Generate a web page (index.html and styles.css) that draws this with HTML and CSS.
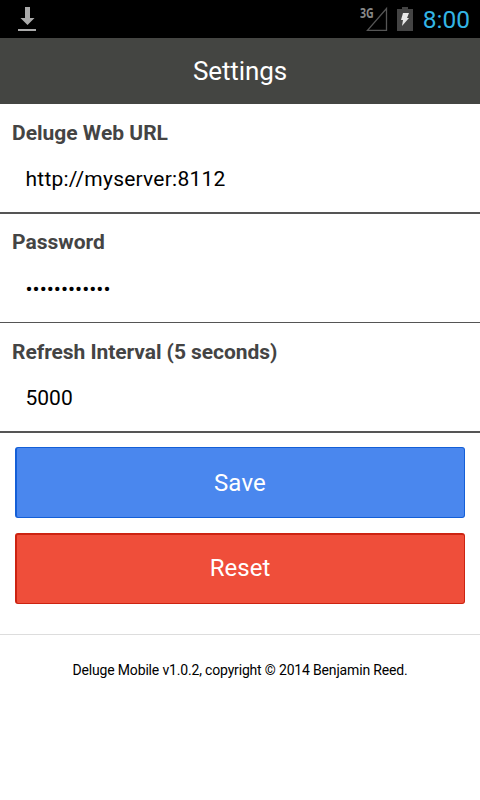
FILE: index.html
```html
<!DOCTYPE html>
<html lang="en">
<head>
<meta charset="utf-8">
<title>Settings</title>
<link rel="stylesheet" href="styles.css">
</head>
<body>
<div class="status">
  <svg class="download" width="20" height="26" viewBox="0 0 20 26"><path d="M8 1h5v11h4.500L10.500 19 3.500 12H8z" fill="#aaa"/><path d="M1 23h18v2H1z" fill="#aaa"/></svg>
  <div class="network"><span class="gen">3G</span><svg width="28" height="28" viewBox="0 0 28 28"><path d="M26.500 3.500v21.800H7.500z" fill="none" stroke="#555" stroke-width="1.300"/></svg></div>
  <svg class="battery" width="16" height="24" viewBox="0 0 16 24"><path d="M5 0h6v2h5v22H0V2h5z" fill="#444"/><path d="M6 6h6l-2 5h2l-7 8 1-6H4z" fill="#e8e8e8"/></svg>
  <span class="clock">8:00</span>
</div>
<header class="bar">Settings</header>
<main>
  <label class="field"><span class="label">Deluge Web URL</span><span class="value url">http://myserver:8112</span></label>
  <label class="field middle"><span class="label">Password</span><span class="value password">••••••••••••</span></label>
  <label class="field"><span class="label interval">Refresh Interval (5 seconds)</span><span class="value">5000</span></label>
  <div class="actions"><button class="save">Save</button><button class="reset">Reset</button></div>
</main>
<footer>Deluge Mobile v1.0.2, copyright © 2014 Benjamin Reed.</footer>
</body>
</html>
```
FILE: styles.css
```css
* { box-sizing: border-box; }
body { margin: 0; height: 800px; overflow: hidden; background: #fff; color: #000; font-family: Roboto, sans-serif; }
.status { height: 38px; background: #000; display: flex; align-items: center; padding: 0 10px 0 17px; }
.network { position: relative; width: 28px; height: 28px; margin: 0 9px 0 auto; }
.gen { position: absolute; left: 0; top: 1px; font-family: "Open Sans", sans-serif; font-size: 14px; line-height: 14px; font-weight: 700; transform: scaleX(0.76); transform-origin: left; color: #888; }
.battery { margin-bottom: 1px; }
.clock { margin-left: 10px; font-size: 24.500px; line-height: 30px; padding-top: 1px; color: #33b5e5; }
.bar { height: 66px; background: #444542; color: #fff; font-size: 26px; line-height: 66px; text-align: center; letter-spacing: -0.1px; }
.field { display: flex; flex-direction: column; height: 110px; border-bottom: 2px solid #555; padding: 16px 12px 0; }
.middle { height: 109px; border-bottom-width: 1px; padding-top: 15px; }
.label { font-size: 21px; line-height: 26px; font-weight: 700; color: #444; }
.interval { letter-spacing: -0.06px; }
.value { font-size: 21px; line-height: 26px; margin: 20px 0 0 13.500px; }
.url { letter-spacing: 0.23px; }
.password { margin: 21px 0 0 13.500px; }
.actions { display: grid; gap: 15px; padding: 14px 15px 30px; }
button { height: 71px; border-radius: 3px; border: 1px solid; border-left-width: 2px; color: #fff; font: 24px Roboto, sans-serif; padding: 0 7px 0 6px; }
.save { background: #4a87ee; border-color: #145fd7; letter-spacing: 0.2px; }
.reset { background: #ef4e3a; border-color: #cc2311; border-top-width: 2px; padding-bottom: 2px; }
footer { border-top: 1px solid #ddd; padding-top: 26px; text-align: center; font-size: 14px; line-height: 18px; letter-spacing: -0.17px; }
```
